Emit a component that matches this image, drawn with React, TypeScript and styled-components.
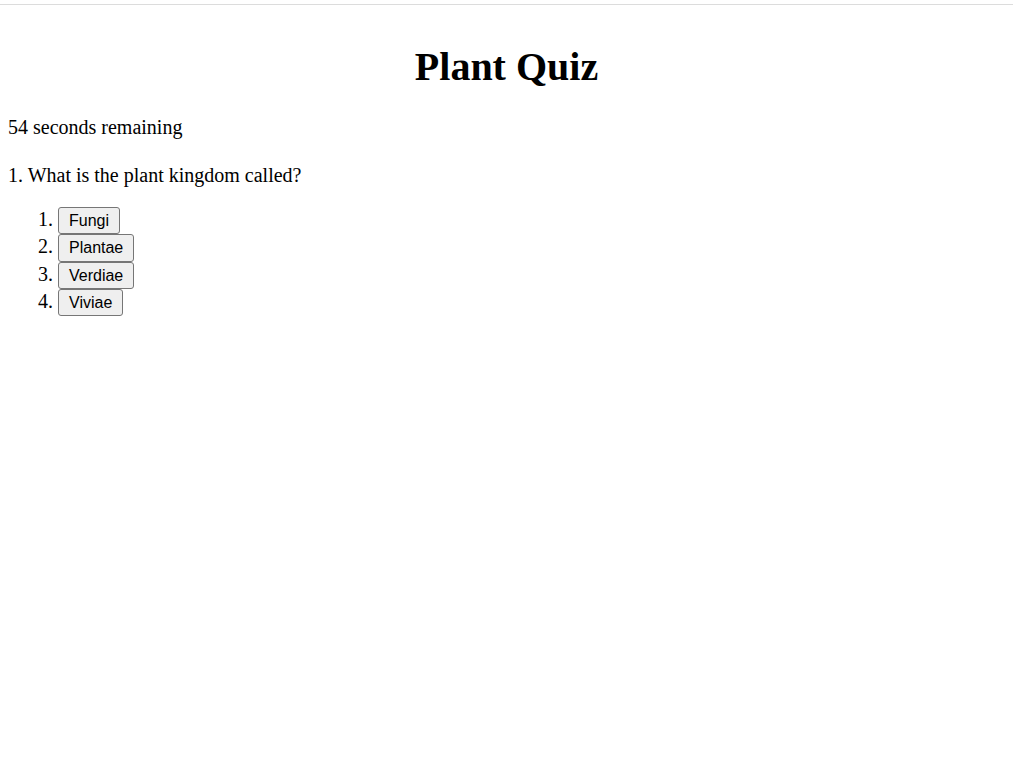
import React from "react";
import styled, { createGlobalStyle } from "styled-components";

const GlobalStyle = createGlobalStyle`
  html, body {
    margin: 0;
    padding: 0;
    background: #ffffff;
  }
  body {
    font-family: "Liberation Serif", "Times New Roman", serif;
    font-size: 20px;
    color: #000000;
  }
`;

const Page = styled.div`
  border-top: 1px solid #dcdcdc;
  margin-top: 4px;
  padding: 0 8px;
  display: flow-root;
`;

const Title = styled.h1`
  font-size: 40px;
  font-weight: bold;
  text-align: center;
  margin: 38px 0 0;
  line-height: normal;
`;

const Timer = styled.p`
  margin: 26px 0 0;
  line-height: normal;
`;

const Question = styled.p`
  margin: 25px 0 0;
  line-height: normal;
`;

const Answers = styled.ol`
  margin: 20px 0 0;
  padding: 0 0 0 50px;
`;

const Answer = styled.li`
  line-height: normal;
`;

const Choice = styled.button`
  font-family: "Liberation Sans", Arial, sans-serif;
  font-size: 16px;
  line-height: 19.3px;
  color: #000000;
  background: #efefef;
  border: 1px solid #767676;
  border-radius: 3px;
  padding: 3px 10px;
  margin: 0;
  cursor: pointer;
`;

const choices = ["Fungi", "Plantae", "Verdiae", "Viviae"];

export default function App() {
  return (
    <>
      <GlobalStyle />
      <Page>
        <Title>Plant Quiz</Title>
        <Timer>54 seconds remaining</Timer>
        <Question>1. What is the plant kingdom called?</Question>
        <Answers>
          {choices.map((c) => (
            <Answer key={c}>
              <Choice type="button">{c}</Choice>
            </Answer>
          ))}
        </Answers>
      </Page>
    </>
  );
}
